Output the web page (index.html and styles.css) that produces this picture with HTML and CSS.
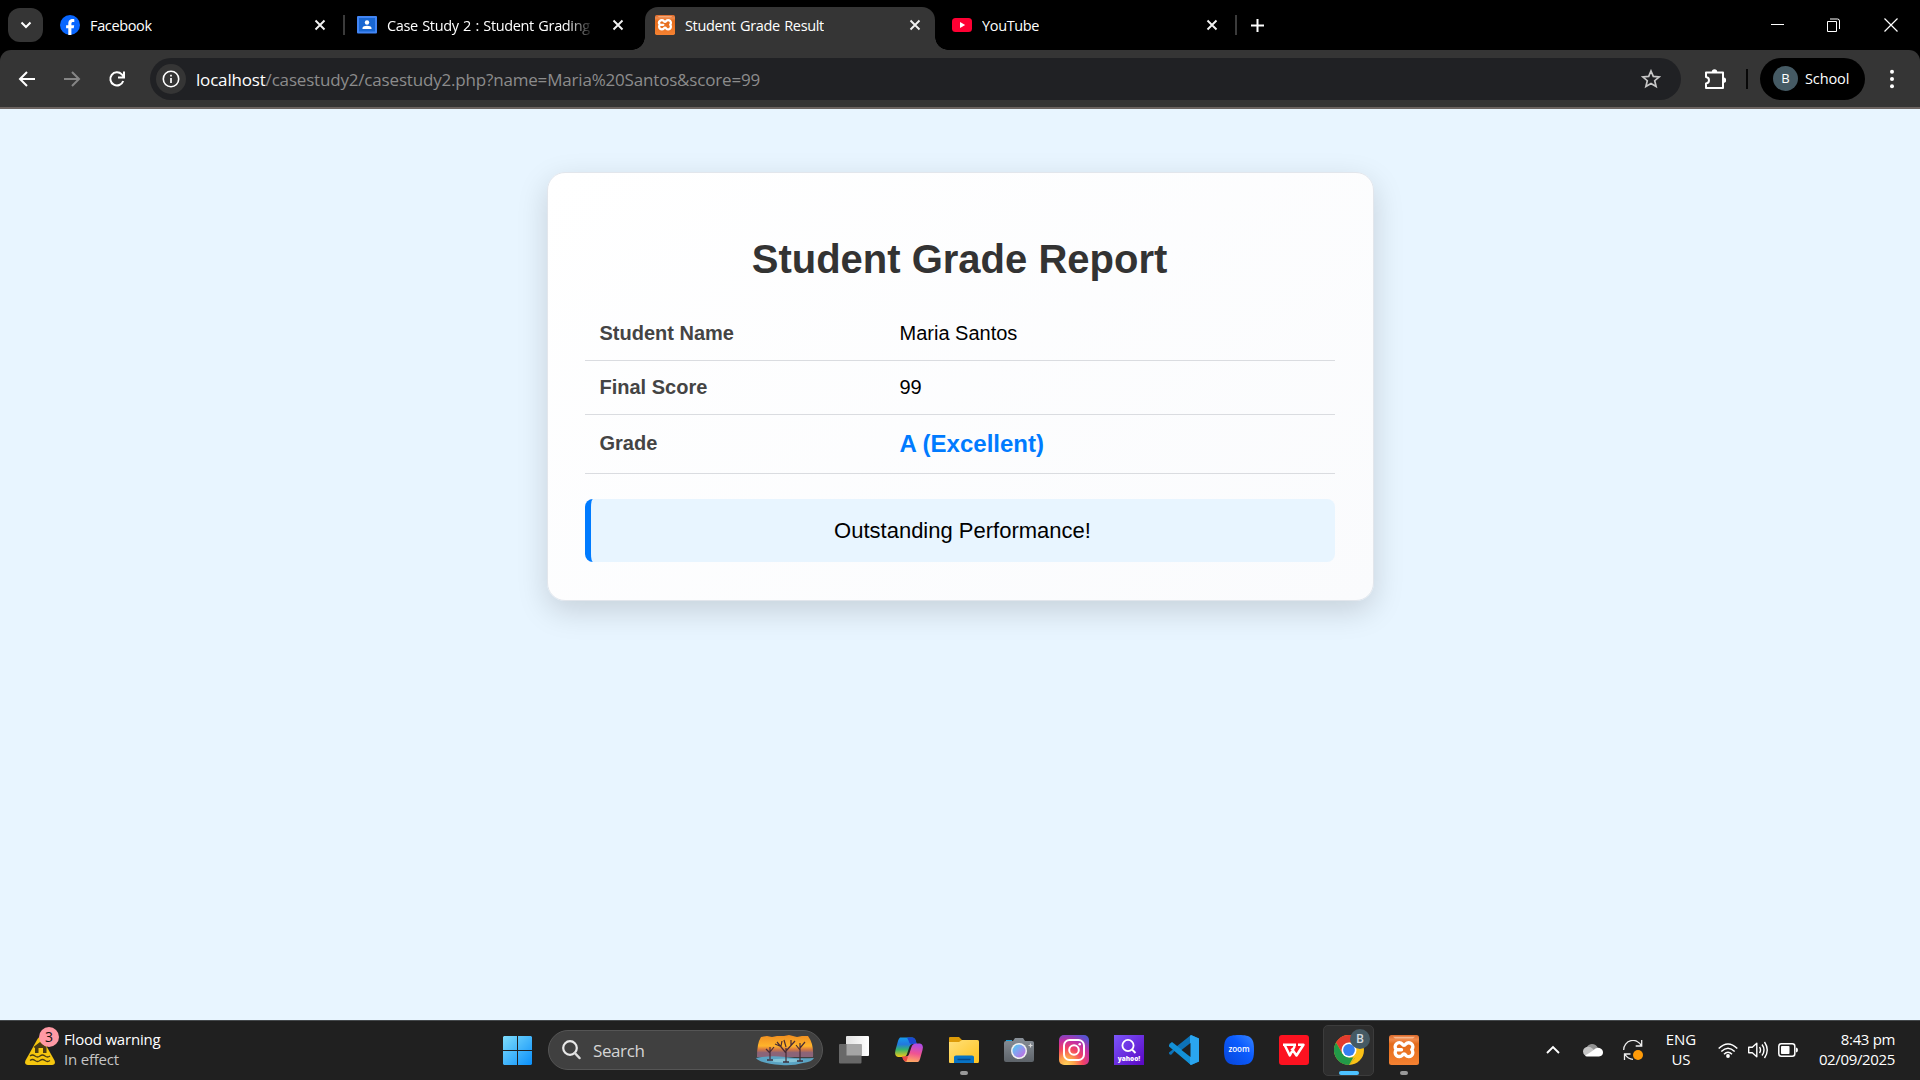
FILE: index.html
```html
<!DOCTYPE html>
<html lang="en">
<head>
<meta charset="utf-8">
<title>Student Grade Result</title>
<link rel="stylesheet" href="styles.css">
</head>
<body>
<svg class="defs" width="0" height="0">
  <defs>
    <linearGradient id="orange" x1="0" y1="0" x2="0" y2="1"><stop offset="0" stop-color="#dc6a2c"/><stop offset=".15" stop-color="#f0894a"/><stop offset=".3" stop-color="#e46b1a"/><stop offset="1" stop-color="#f58232"/></linearGradient>
    <symbol id="xampp" viewBox="0 0 30 30">
      <rect width="30" height="30" rx="2.5" fill="url(#orange)"/>
      <path d="M4 1.8h22l-2 1.6H6z" fill="#f7b78d"/>
      <path d="M13.200 9A4 4 0 1 0 7.300 14.700A4 4 0 1 0 13.200 20.300Q15 17.800 16.800 20.300A4 4 0 1 0 22.700 14.700A4 4 0 1 0 16.800 9Q15 11.600 13.200 9zM7.300 14.700H12.500" fill="none" stroke="#fff" stroke-width="3.400" stroke-linecap="round" stroke-linejoin="round"/>
    </symbol>
    <symbol id="close" viewBox="0 0 12 12"><path d="M1.500 1.500l9 9M10.500 1.500l-9 9" stroke="#f2f2f2" stroke-width="1.900"/></symbol>
  </defs>
</svg>

<header class="tabs">
  <button class="tab-search"><svg width="12" height="8" viewBox="0 0 12 8"><path d="M1.500 1.500L6 6l4.500-4.500" fill="none" stroke="#fff" stroke-width="2"/></svg></button>
  <div class="tab tab-fb">
    <svg class="fav" viewBox="0 0 20 20"><circle cx="10" cy="10" r="10" fill="#0866ff"/><path d="M8.300 19.900v-6.600H6.100v-3.100h2.200V8.900c0-3.500 1.600-4.900 4.600-4.900.6 0 1.100.1 1.400.2V7h-1.100c-1.300 0-1.800.6-1.800 1.900v1.300h2.800l-.5 3.100h-2.300v6.600z" fill="#fff"/></svg>
    <span class="label">Facebook</span><svg class="x"><use href="#close"/></svg>
  </div>
  <i class="sep"></i>
  <div class="tab tab-class">
    <svg class="fav" viewBox="0 0 20 20"><rect y="1" width="20" height="17.500" rx="1" fill="#4285f4"/><rect x="2" y="3" width="16" height="13.500" fill="#1967d2"/><circle cx="10" cy="7.500" r="2.200" fill="#fff"/><path d="M5.500 14v-1c0-3 9-3 9 0v1z" fill="#fff"/></svg>
    <span class="label fade">Case Study 2 : Student Grading S</span><svg class="x"><use href="#close"/></svg>
  </div>
  <div class="tab tab-active">
    <svg class="fav"><use href="#xampp"/></svg>
    <span class="label">Student Grade Result</span><svg class="x"><use href="#close"/></svg>
  </div>
  <div class="tab tab-yt">
    <svg class="fav" viewBox="0 0 20 20"><rect y="3" width="20" height="14" rx="3.500" fill="#ff0033"/><path d="M8 7l5.200 3L8 13z" fill="#fff"/></svg>
    <span class="label">YouTube</span><svg class="x"><use href="#close"/></svg>
  </div>
  <i class="sep"></i>
  <svg class="plus" viewBox="0 0 13 13"><path d="M6.500 0v13M0 6.500h13" stroke="#fff" stroke-width="2"/></svg>
  <div class="window">
    <svg width="13" height="14"><path d="M0 6.500h13" stroke="#fff"/></svg>
    <svg width="13" height="14"><path d="M.5 3.500h9v10h-9zM3 1h7.500q2 0 2 2v8" fill="none" stroke="#fff"/></svg>
    <svg width="14" height="14"><path d="M.5.500l13 13M13.500.500l-13 13" stroke="#fff" stroke-width="1.200"/></svg>
  </div>
</header>

<nav class="toolbar">
  <svg class="nav-icon" viewBox="0 0 18 18"><path d="M17 9H2M9 2L2 9l7 7" fill="none" stroke="#fff" stroke-width="2"/></svg>
  <svg class="nav-icon" viewBox="0 0 18 18"><path d="M1 9h15M9 2l7 7-7 7" fill="none" stroke="#858585" stroke-width="2"/></svg>
  <svg class="nav-icon" viewBox="0 0 18 18"><path d="M15.200 11A6.600 6.600 0 1 1 13.800 4.400L16 6.800M16 1.500v6h-6" fill="none" stroke="#fff" stroke-width="2"/></svg>
  <div class="address">
    <span class="info"><svg width="18" height="18"><circle cx="9" cy="9" r="7.700" fill="none" stroke="#fff" stroke-width="1.600"/><path d="M9 8v5M9 4.800v1.800" stroke="#fff" stroke-width="1.700"/></svg></span>
    <span class="url"><b>localhost</b>/casestudy2/casestudy2.php?name=Maria%20Santos&amp;score=99</span>
    <svg class="star" viewBox="0 0 20 20"><path d="M10 2l2.300 5.400 5.900.5-4.500 3.800 1.400 5.700-5.100-3-5.100 3 1.400-5.700L1.800 7.900l5.900-.5z" fill="none" stroke="#c7c7c7" stroke-width="1.700"/></svg>
  </div>
  <svg class="puzzle" viewBox="0 0 22 22"><path d="M2 4.500h17v15.500H2v-4.500q3-.3 3-3.200T2 9z" fill="none" stroke="#fff" stroke-width="2" stroke-linejoin="round"/><path d="M7.800 4a2.700 2.700 0 0 1 5.400 0zM19.500 9.500a2.700 2.700 0 0 1 0 5.400z" fill="#fff"/></svg>
  <i class="bar"></i>
  <div class="profile"><span class="avatar">B</span><span>School</span></div>
  <svg class="dots" viewBox="0 0 4 20"><circle cx="2" cy="2.800" r="2" fill="#fff"/><circle cx="2" cy="10" r="2" fill="#fff"/><circle cx="2" cy="17.200" r="2" fill="#fff"/></svg>
</nav>

<main class="page">
  <section class="card">
    <h1>Student Grade Report</h1>
    <table>
      <tr><th>Student Name</th><td>Maria Santos</td></tr>
      <tr><th>Final Score</th><td>99</td></tr>
      <tr><th>Grade</th><td class="grade">A (Excellent)</td></tr>
    </table>
    <p class="message">Outstanding Performance!</p>
  </section>
</main>

<footer class="taskbar">
  <div class="weather">
    <div class="warn">
      <svg width="30" height="28" viewBox="0 0 30 28"><path d="M12.500 2q2.500-4 5 0l12 21.500q1.500 4-2.500 4.500H3q-4-.5-2.500-4.500z" fill="#f5c60f"/><path d="M8.500 10L15 5l6.500 5v6H18v-5h-4.500v5H10v-5z" fill="#4a3c13"/><path d="M5 19q2.500-2 5 0t5 0 5 0 5 0M5 23.500q2.500-2 5 0t5 0 5 0 5 0" fill="none" stroke="#4a3c13" stroke-width="1.300"/></svg>
      <span class="count">3</span>
    </div>
    <div class="forecast"><span>Flood warning</span><small>In effect</small></div>
  </div>

  <div class="apps">
    <svg class="start" viewBox="0 0 29 29"><defs><linearGradient id="win" x1="0" y1="0" x2="1" y2="1"><stop stop-color="#7eddfc"/><stop offset="1" stop-color="#0a8ffa"/></linearGradient></defs><path d="M1 0h13v14H0V1zM15 0h13l1 1v13H15zM0 15h14v14H1l-1-1zM15 15h14v13l-1 1H15z" fill="url(#win)"/></svg>
    <div class="search">
      <svg width="19" height="20" viewBox="0 0 19 20"><circle cx="8" cy="8" r="6.800" fill="none" stroke="#e8e8e8" stroke-width="2.200"/><path d="M12.800 13l4.700 5" stroke="#dcdcdc" stroke-width="2.500" stroke-linecap="round"/></svg>
      <span>Search</span>
      <svg class="desert" viewBox="0 0 58 31"><defs><linearGradient id="dusk" x1="0" y1="0" x2="0" y2="1"><stop stop-color="#f08d20"/><stop offset=".5" stop-color="#ffb42b"/><stop offset=".65" stop-color="#d9793f"/><stop offset=".8" stop-color="#8b6478"/></linearGradient></defs>
        <path d="M1 22Q1 8 5 2l6-1 5 1 5-1 7 0 5-1 8 2 5-1 6 0q6 8 5 21z" fill="url(#dusk)"/><path d="M0 23q15-3 29-1t29 1q-2 4-11 5-10 3-22 2Q3 28 0 23z" fill="#5ba4c4"/><path d="M10 25q20-3 38 0-20 5-38 0z" fill="#84c4d8"/>
        <path d="M30 27V13M30 18L21 7M30 16l9-10M26 12l-7-3M35 10V5M25 11l1-5M30 12l-2-7M14 24V12M14 18l-4-4M14 17l4-5M44 26V8M44 15l-4-5M44 13l5-6" fill="none" stroke="#472c36" stroke-width="1.200"/><path d="M27 27h6M11 25h6M41 26h6" stroke="#382e3d" stroke-width="1.600"/></svg>
    </div>
    <div class="app"><svg viewBox="0 0 30 30"><defs><linearGradient id="tv"><stop stop-color="#e2e2e2"/><stop offset="1" stop-color="#fff"/></linearGradient></defs><rect x="7" y="1" width="23" height="20" rx="1" fill="url(#tv)"/><rect x="0" y="9" width="22.500" height="19.500" rx="1" fill="#686868"/><path d="M7.500 9h15v11.500h-15z" fill="#a5a5a5"/></svg></div>
    <div class="app"><svg viewBox="0 0 30 30"><defs><linearGradient id="cp1" x1="0" y1="0" x2="0" y2="1"><stop stop-color="#159ced"/><stop offset=".35" stop-color="#2378df"/><stop offset=".62" stop-color="#36b36c"/><stop offset="1" stop-color="#f6c915"/></linearGradient><linearGradient id="cp2" x1=".5" y1="0" x2=".3" y2="1"><stop stop-color="#ae4be5"/><stop offset=".5" stop-color="#f05392"/><stop offset="1" stop-color="#ffb15f"/></linearGradient></defs>
      <path d="M6 2.500h12q3 0 4 4l.6 2.500H19q-3 0-4 4l-2 6q-1 3-4 3H4Q0 21 1.500 15L4 6q.6-2.500 2-3.500z" fill="url(#cp1)"/><path d="M13 2.500h5q3 0 4 4l.6 2.500H17q-2-.5-2.500-3.500z" fill="#1b48d2"/><path d="M24 27H13q-3 0-4-4l-.6-1.500H12q2.500 0 3.500-3.500l2-6q1-3.500 4.500-3.500h4q4 1 2.500 6.500L26 24q-.7 2.300-2 3z" fill="url(#cp2)"/><path d="M8 21.500h6l-1.500 5Q9.500 27 8 21.500z" fill="#e94a44"/></svg></div>
    <div class="app running"><svg viewBox="0 0 30 30"><defs><linearGradient id="fold" x1="0" y1="0" x2="1" y2="1"><stop stop-color="#ffe07a"/><stop offset="1" stop-color="#ffc31f"/></linearGradient></defs><path d="M0 3q0-1 1-1h9l3 3h15q2 0 2 2v10H0z" fill="#dd9b08"/><path d="M0 7h10l3-2h15q2 0 2 2v19q0 2-1 2H1q-1 0-1-1z" fill="url(#fold)"/><path d="M5 28v-6q0-1.500 2-1.500h16q2 0 2 1.500v6z" fill="#0873c4"/><path d="M8.500 24.500h13" stroke="#05498a" stroke-width="1.500"/></svg></div>
    <div class="app"><svg viewBox="0 0 30 30"><defs><linearGradient id="cam" x1="0" y1="0" x2="0" y2="1"><stop stop-color="#899098"/><stop offset="1" stop-color="#5d6369"/></linearGradient><linearGradient id="lens" x1="0" y1="0" x2="1" y2="1"><stop stop-color="#49d2f2"/><stop offset=".5" stop-color="#8e9aef"/><stop offset="1" stop-color="#ca65dd"/></linearGradient></defs><path d="M2 5h6v4H2z" fill="#159bd7"/><path d="M0 8q0-2 2-2h7l2-3h8l2 3h7q2 0 2 2v17q0 2-2 2H2q-2 0-2-2z" fill="url(#cam)"/><circle cx="15" cy="16" r="8" fill="#f1f1f1"/><circle cx="15" cy="16" r="6.500" fill="url(#lens)"/><path d="M26.500 8.500v4M24.500 10.500h4" stroke="#d8d8d8" stroke-width="1.200"/></svg></div>
    <div class="app"><svg viewBox="0 0 30 30"><defs><radialGradient id="ig" cx=".25" cy="1" r="1.100"><stop stop-color="#ffd35a"/><stop offset=".25" stop-color="#fda04a"/><stop offset=".5" stop-color="#f34462"/><stop offset=".75" stop-color="#c32fa5"/><stop offset="1" stop-color="#5b52d0"/></radialGradient></defs><rect width="30" height="30" rx="5" fill="url(#ig)"/><rect x="5" y="5" width="20" height="20" rx="5.500" fill="none" stroke="#fff" stroke-width="2"/><circle cx="15" cy="15" r="4.800" fill="none" stroke="#fff" stroke-width="2"/><circle cx="20.700" cy="9.300" r="1.300" fill="#fff"/></svg></div>
    <div class="app"><svg viewBox="0 0 30 30"><defs><linearGradient id="ya" x1="0" y1="0" x2="1" y2="1"><stop stop-color="#7b56fb"/><stop offset="1" stop-color="#5a06c4"/></linearGradient></defs><rect width="30" height="30" fill="url(#ya)"/><circle cx="14" cy="10.500" r="5.600" fill="none" stroke="#fff" stroke-width="1.800"/><path d="M18 14.500l3.500 3.500" stroke="#fff" stroke-width="2"/><text x="15" y="25.500" text-anchor="middle" class="yahoo">yahoo!</text></svg></div>
    <div class="app"><svg viewBox="0 0 30 30"><path d="M22 0l8 3.500v23L22 30 6 15.500 2.500 19.500Q1 20.500 0 18.500v-1L22 0z" fill="#0d72b8"/><path d="M1 8.500L3 7l19 15v8L0 11.500V10z" fill="#1390d6"/><path d="M21 1l1-1 8 3.500v23L22 30l-1-1z" fill="#2aa5ef"/><path d="M21.500 8v14L12.500 15z" fill="#202020"/></svg></div>
    <div class="app"><svg viewBox="0 0 30 30"><defs><linearGradient id="zm" x1="0" y1="1" x2="1" y2="0"><stop stop-color="#0845d8"/><stop offset=".6" stop-color="#0b5cff"/><stop offset="1" stop-color="#3a86ff"/></linearGradient></defs><path d="M15 0c12 0 15 3 15 15s-3 15-15 15S0 27 0 15 3 0 15 0z" fill="url(#zm)"/><text x="15" y="17" text-anchor="middle" class="zoom">zoom</text></svg></div>
    <div class="app"><svg viewBox="0 0 30 30"><rect width="30" height="30" rx="3" fill="#fc1220"/><path d="M4 9.700h13M5.500 9.700L10.800 20.500 15.800 11M12.500 13.500L17.500 20.500 24.500 9.700h-5.500" fill="none" stroke="#fff" stroke-width="2.500" stroke-linejoin="round"/></svg></div>
    <div class="app current"><svg viewBox="0 0 30 30"><circle cx="15" cy="15" r="15" fill="#fbc116"/><path d="M2 7.500A15 15 0 0 1 28 7.500H15L8.500 18.700z" fill="#e33b2e"/><path d="M2 7.500l6.500 11.200L15 22.500h6.500L15 30A15 15 0 0 1 2 7.500z" fill="#229a48"/><path d="M15 30l6.500-11.300V22.500z" fill="#fbc116"/><circle cx="15" cy="15" r="7.500" fill="#fff"/><circle cx="15" cy="15" r="5.900" fill="#357ff0"/></svg><span class="badge">B</span></div>
    <div class="app running"><svg><use href="#xampp"/></svg></div>
  </div>

  <div class="tray">
    <svg width="14" height="10" viewBox="0 0 14 10"><path d="M1 8l6-6 6 6" fill="none" stroke="#fff" stroke-width="1.900"/></svg>
    <svg class="cloud" viewBox="0 0 20 14"><path d="M4 9a5.500 5.500 0 0 1 5-8q4 0 6 4l-5 6z" fill="#929292"/><path d="M3.500 4Q7 3 10 6l4 4-8 3Q0 13 0 8.500 0 5 3.500 4z" fill="#c5c5c5"/><path d="M2 12.500Q5 11 10 7.500 13 4 16.500 5 20 6 20 9.500q0 3.500-4 4H4q-1.500 0-2-1z" fill="#fff"/></svg>
    <svg class="sync" viewBox="0 0 20 20"><path d="M.7 10A9.300 9.300 0 0 1 18.500 6M18.700 0v6h-6M1.500 20v-6h6M2 14.500q3 4.500 8 4.800" fill="none" stroke="#eee" stroke-width="1.300"/><circle cx="15" cy="15" r="5" fill="#ff9b08"/></svg>
    <div class="lang"><span>ENG</span><span>US</span></div>
    <svg class="wifi" viewBox="0 0 20 15"><path d="M.7 5.500q9.300-9 18.600 0M3.300 8.500q6.700-6.500 13.400 0M6 11.300q4-4 8 0" fill="none" stroke="#fff" stroke-width="1.500"/><circle cx="10" cy="13" r="1.900" fill="#fff"/></svg>
    <svg class="sound" viewBox="0 0 20 18"><path d="M.7 6.200h3.600l4.500-4v13.600l-4.500-4H.7zM11.500 6q2 3 0 6M14 3.500q4 5.500 0 11M16.500 1q5.500 8 0 16" fill="none" stroke="#fff" stroke-width="1.400" stroke-linejoin="round"/></svg>
    <svg class="battery" viewBox="0 0 20 14"><rect x=".8" y=".8" width="16" height="12.400" rx="2.500" fill="none" stroke="#fff" stroke-width="1.500"/><rect x="3" y="3" width="8.500" height="8" rx=".8" fill="#fff"/><path d="M18 4.500q2 .2 2 2.500t-2 2.500z" fill="#fff"/></svg>
    <div class="clock"><span>8:43 pm</span><span>02/09/2025</span></div>
  </div>
</footer>
</body>
</html>
```
FILE: styles.css
```css
* { box-sizing: border-box; }
body {
  margin: 0; width: 1920px; height: 1080px; overflow: hidden;
  display: flex; flex-direction: column;
  background: #000; font-family: "Open Sans", "Noto Sans", sans-serif; color: #fff;
}
svg { display: block; flex: none; }
.defs { position: absolute; }

.tabs { height: 50px; flex: none; display: flex; align-items: center; font-size: 14.5px; padding-left: 8px; }
.tab-search { width: 35px; height: 34px; border: 0; border-radius: 12px; background: #353535; padding: 0; display: grid; place-items: center; }
.tab { display: flex; align-items: center; height: 42px; gap: 10px; }
.tab .fav { width: 20px; height: 20px; }
.tab .x { width: 12px; height: 12px; margin-left: auto; }
.label { white-space: nowrap; letter-spacing: -.35px; word-spacing: 1px; overflow: hidden; line-height: 24px; padding-top: 1px; }
.tab-fb { width: 300px; padding: 0 17px; }
.tab-class { width: 300px; padding: 0 21px 0 12px; }
.tab-class .label { width: 209px; }
.fade { -webkit-mask-image: linear-gradient(90deg, #000 86%, transparent 99%); mask-image: linear-gradient(90deg, #000 86%, transparent 99%); }
.tab-active { position: relative; width: 290px; height: 43px; margin-top: 7px; padding: 0 14px 7px 10px; background: #353535; border-radius: 13px 13px 0 0; }
.tab-active::before, .tab-active::after { content: ""; position: absolute; bottom: 0; width: 13px; height: 13px; }
.tab-active::before { left: -13px; background: radial-gradient(circle at 0 0, transparent 12.5px, #353535 13px); }
.tab-active::after { right: -13px; background: radial-gradient(circle at 100% 0, transparent 12.5px, #353535 13px); }
.tab-yt { width: 300px; padding: 0 17px; }
.sep { width: 2px; height: 20px; background: #3b3b3b; flex: none; }
.plus { width: 13px; height: 13px; margin-left: 14px; }
.window { margin-left: auto; display: flex; gap: 44px; padding-right: 22px; }
.window svg:first-child { margin-right: -1px; }

.toolbar { height: 59px; flex: none; display: flex; align-items: center; background: #353535; border-bottom: 2px solid #6c6461; border-radius: 11px 11px 0 0; padding-left: 18px; }
.nav-icon { width: 18px; height: 18px; margin-right: 27px; }
.nav-icon:nth-child(3) { margin-right: 24px; }
.address { width: 1531px; height: 42px; border-radius: 21px; background: #202124; display: flex; align-items: center; padding: 0 20px 0 6px; }
.info { width: 30px; height: 30px; border-radius: 50%; background: #353535; display: grid; place-items: center; }
.url { margin-left: 10px; font-size: 17px; letter-spacing: -.18px; color: #8c8c8c; padding-top: 1px; }
.url b { color: #fff; font-weight: 400; }
.star { width: 20px; height: 20px; margin-left: auto; }
.puzzle { width: 22px; height: 22px; margin-left: 23px; }
.bar { width: 2px; height: 20px; background: #080808; margin-left: 20px; }
.profile { width: 105px; height: 42px; margin-left: 12px; padding-left: 13px; border-radius: 21px; background: #000; display: flex; align-items: center; gap: 7px; font-size: 14.5px; letter-spacing: -.1px; }
.avatar { width: 25px; height: 25px; border-radius: 50%; background: #455a64; font-size: 13px; text-align: center; line-height: 25px; }
.dots { width: 4px; height: 20px; margin-left: 25px; }

.page { flex: 1; background: #e8f5ff; padding-top: 63px; font-family: "Liberation Sans", Arial, sans-serif; color: #000; }
.card {
  width: 827px; height: 429px; margin: 0 auto; padding: 63px 38px 0 37px;
  border: 1px solid #e2e6ec; border-radius: 18px;
  background: linear-gradient(145deg, #ffffff, #fafbfd);
  box-shadow: 0 10px 31px rgba(0, 0, 0, .15);
}
h1 { margin: 0 0 25px; text-align: center; color: #333; font-size: 40px; line-height: 46px; }
table { width: 100%; border-collapse: collapse; table-layout: fixed; }
tr { height: 54px; border-bottom: 1px solid #dadce0; }
tr:first-child { height: 53px; }
tr:last-child { height: 59px; }
th, td { padding: 0 15px; text-align: left; font-size: 20px; line-height: 23px; }
th { width: 300px; color: #444; }
.grade { font-size: 24px; font-weight: 700; color: #007bff; }
.message { margin: 25px 0 0; height: 63px; border-left: 6px solid #007bff; border-radius: 8px; background: #e8f5ff; text-align: center; font-size: 22px; line-height: 63px; }

.taskbar { height: 60px; flex: none; background: #202020; border-top: 1px solid #44484b; display: grid; grid-template-columns: 503px 929px 1fr; align-items: center; font-size: 15px; }
.weather { display: flex; padding: 0 0 3px 25px; gap: 9px; align-items: center; }
.warn { position: relative; padding-top: 4px; }
.count { position: absolute; left: 14px; top: -6px; width: 20px; height: 20px; border-radius: 50%; background: #ff99a4; color: #111; font-size: 14px; line-height: 20px; text-align: center; }
.forecast { display: flex; flex-direction: column; line-height: 20px; letter-spacing: -.2px; }
.forecast small { font-size: 15px; color: #c5c5c5; }
.apps { display: flex; align-items: center; height: 59px; padding-bottom: 1px; }
.start { width: 29px; height: 29px; }
.search { width: 275px; height: 40px; margin: 0 3px 0 16px; border: 1px solid #555; border-radius: 20px; background: #404040; display: flex; align-items: center; gap: 12px; padding: 0 8px 0 13px; font-size: 17px; letter-spacing: -.4px; color: #d5d5d5; }
.desert { width: 58px; height: 31px; margin-left: auto; }
.app { position: relative; width: 51px; height: 51px; margin: 0 2px; display: grid; place-items: center; }
.app > svg { width: 30px; height: 30px; }
.running::after, .current::after { content: ""; position: absolute; bottom: 1px; width: 8px; height: 4px; border-radius: 2px; background: #999; }
.current { background: #2e2e2e; border: 1px solid #3c3c3c; border-radius: 5px; }
.current::after { width: 20px; bottom: 0; background: #4cc2ff; }
.badge { position: absolute; right: 3px; top: 3px; width: 20px; height: 20px; border-radius: 50%; background: #455a64; color: #d5dde1; font-size: 12px; font-weight: 600; line-height: 20px; text-align: center; }
.yahoo { font: 800 6.5px "Open Sans", sans-serif; fill: #fff; }
.zoom { font: 600 8px "Open Sans", sans-serif; fill: #fff; }
.tray { display: flex; align-items: center; justify-content: flex-end; padding: 0 25px 1px 0; line-height: 20px; }
.tray span { display: block; }
.cloud { width: 20px; height: 14px; margin-left: 23px; }
.sync { width: 20px; height: 20px; margin-left: 20px; }
.lang { width: 40px; margin: 0 17px 0 18px; padding-bottom: 2px; text-align: center; font-size: 15px; }
.wifi { width: 20px; height: 15px; }
.sound { width: 20px; height: 18px; margin: 0 10px; }
.battery { width: 20px; height: 14px; }
.clock { width: 97px; padding-bottom: 3px; text-align: right; letter-spacing: -.35px; white-space: nowrap; }
```
